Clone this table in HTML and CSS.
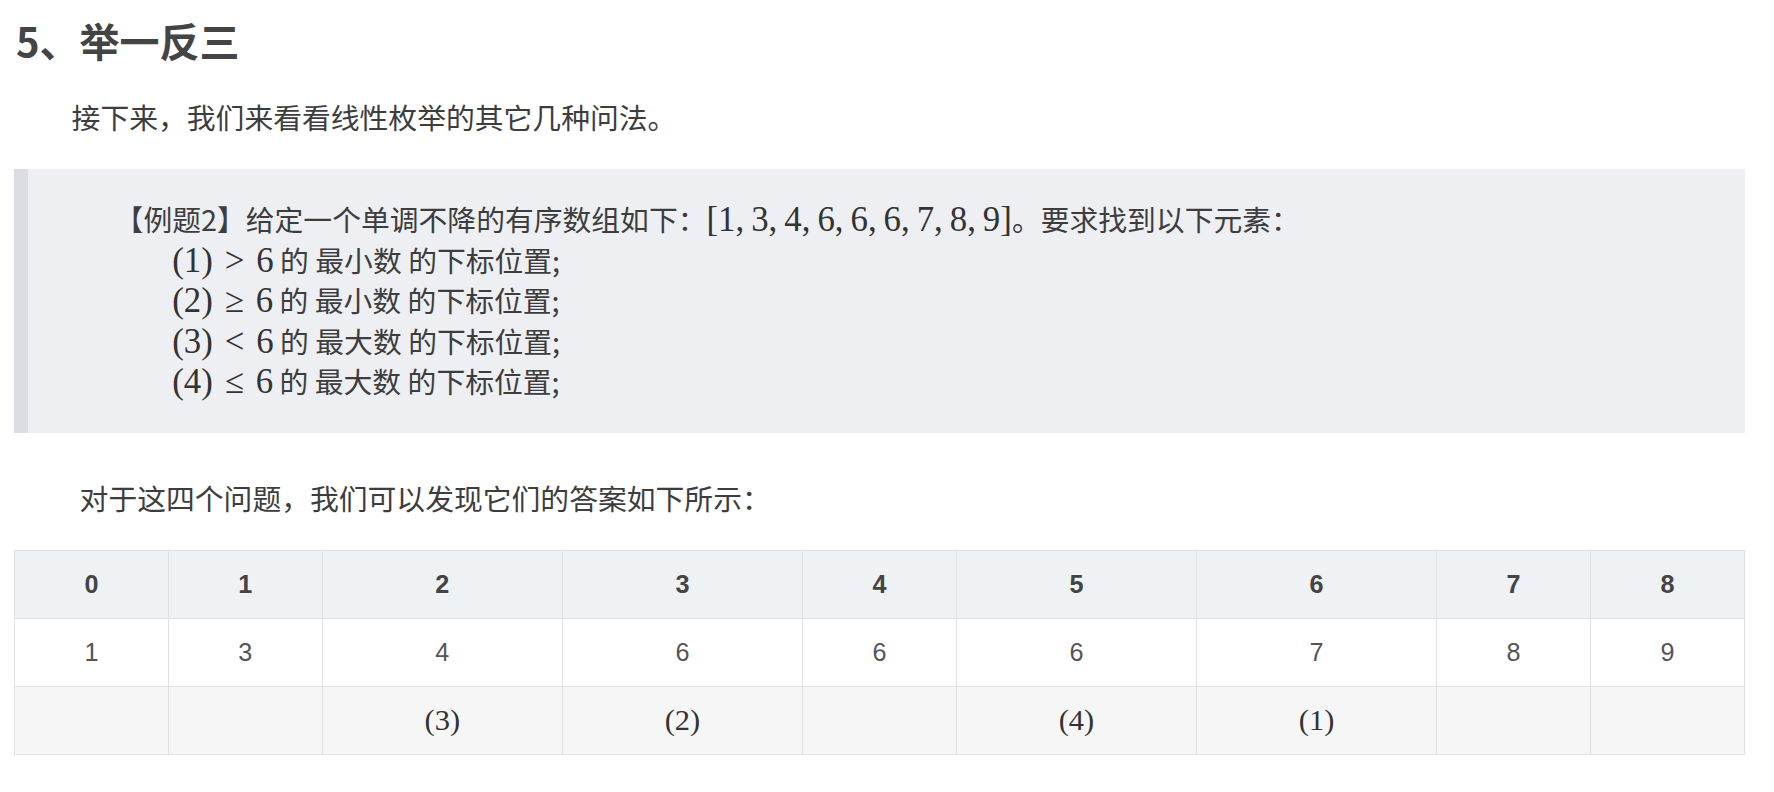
FILE: index.html
```html
<!DOCTYPE html>
<html lang="zh-CN">
<head>
<meta charset="utf-8">
<title>5、举一反三</title>
<link rel="stylesheet" href="styles.css">
</head>
<body>
<main class="article">
  <h2 class="title">5、举一反三</h2>
  <p class="para">接下来，我们来看看线性枚举的其它几种问法。</p>
  <blockquote class="quote">
    <p class="quote-text">【例题2】给定一个单调不降的有序数组如下：<span class="m">[1,&thinsp;3,&thinsp;4,&thinsp;6,&thinsp;6,&thinsp;6,&thinsp;7,&thinsp;8,&thinsp;9]</span>。要求找到以下元素：<br>&emsp;&emsp;&emsp;&emsp;<span class="m">(1)<span class="rel">&gt;</span>6</span> 的 最小数 的下标位置;<br>&emsp;&emsp;&emsp;&emsp;<span class="m">(2)<span class="rel">≥</span>6</span> 的 最小数 的下标位置;<br>&emsp;&emsp;&emsp;&emsp;<span class="m">(3)<span class="rel">&lt;</span>6</span> 的 最大数 的下标位置;<br>&emsp;&emsp;&emsp;&emsp;<span class="m">(4)<span class="rel">≤</span>6</span> 的 最大数 的下标位置;</p>
  </blockquote>
  <p class="para para-shift">对于这四个问题，我们可以发现它们的答案如下所示：</p>
  <table class="grid">
    <colgroup>
      <col class="col-n"><col class="col-n"><col class="col-w"><col class="col-w"><col class="col-n"><col class="col-w"><col class="col-w"><col class="col-n"><col class="col-n">
    </colgroup>
    <thead>
      <tr><th>0</th><th>1</th><th>2</th><th>3</th><th>4</th><th>5</th><th>6</th><th>7</th><th>8</th></tr>
    </thead>
    <tbody>
      <tr class="row-vals"><td>1</td><td>3</td><td>4</td><td>6</td><td>6</td><td>6</td><td>7</td><td>8</td><td>9</td></tr>
      <tr class="row-marks"><td></td><td></td><td><span class="m">(3)</span></td><td><span class="m">(2)</span></td><td></td><td><span class="m">(4)</span></td><td><span class="m">(1)</span></td><td></td><td></td></tr>
    </tbody>
  </table>
</main>
</body>
</html>
```

FILE: styles.css
```css
html, body {
  margin: 0;
  padding: 0;
  background: #ffffff;
}

body {
  font-family: "Noto Sans CJK SC", "Noto Sans", sans-serif;
  color: #3d3d3d;
  font-size: 28.8px;
}

.article {
  padding: 16px 29px 20px 14px;
}

.title {
  margin: 0;
  padding-left: 2px;
  font-size: 40px;
  line-height: 48px;
  font-weight: 700;
  color: #444444;
}

.para {
  margin: 30px 0 0 0;
  line-height: 46px;
  text-indent: 2em;
}

.para-shift {
  margin-top: 42px;
  text-indent: calc(2em + 8px);
}

.quote {
  margin: 29px 0 0 0;
  padding: 30px 29px 31px 29px;
  background: #eeeff3;
  border-left: 14px solid #dcdde2;
}

.quote-text {
  margin: 0;
  line-height: 40.5px;
  text-indent: 2em;
}

.m {
  font-family: "Liberation Serif", "DejaVu Serif", serif;
  font-size: 1.21em;
  line-height: 1;
  color: #333333;
}

.rel {
  margin: 0 0.34em;
}

.grid {
  margin-top: 29px;
  width: 1731px;
  border-collapse: collapse;
  table-layout: fixed;
  font-family: "Liberation Sans", "Noto Sans", sans-serif;
  font-size: 25.2px;
}

.col-n {
  width: 153.4px;
}

.col-w {
  width: 239.4px;
}

.grid th,
.grid td {
  height: 67px;
  padding: 0;
  border: 1px solid #dfe1e4;
  text-align: center;
  vertical-align: middle;
}

.grid th {
  background: #eff2f5;
  color: #444444;
  font-weight: 700;
}

.row-vals td {
  background: #ffffff;
  color: #555555;
}

.row-marks td {
  background: #f6f6f6;
  color: #444444;
}
```
